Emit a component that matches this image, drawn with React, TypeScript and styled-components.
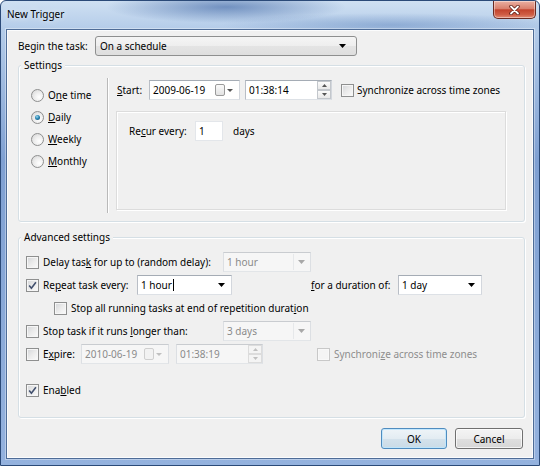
import React from "react";
import styled, { createGlobalStyle, css } from "styled-components";

const GlobalStyle = createGlobalStyle`
  html, body { margin: 0; padding: 0; background: #fff; }
  *, *::before, *::after { box-sizing: border-box; }
`;

const Window = styled.div`
  width: 540px;
  height: 466px;
  display: flex;
  flex-direction: column;
  border: 1px solid #2b4a78;
  border-radius: 6px 6px 0 0;
  overflow: hidden;
  background:
    radial-gradient(ellipse 120px 16px at 225px 6px, rgba(55, 95, 160, 0.6), rgba(55, 95, 160, 0)),
    radial-gradient(ellipse 170px 12px at 390px 24px, rgba(80, 120, 180, 0.4), rgba(80, 120, 180, 0)),
    linear-gradient(180deg, #cfe0f2 0px, #b4cce9 28px, #7fa0d2 160px, #94b2de 100%);
  font-family: "Noto Sans", "Open Sans", sans-serif;
  font-size: 10px;
  color: #000;
`;

const TitleBar = styled.div`
  height: 28px;
  flex: none;
  display: flex;
  align-items: flex-start;
`;

const Title = styled.span`
  padding-left: 6px;
  line-height: 26px;
  text-shadow: 0 0 6px rgba(255, 255, 255, 0.9);
`;

const CloseButton = styled.div`
  margin-left: auto;
  margin-right: 3px;
  width: 43px;
  height: 18px;
  display: flex;
  align-items: center;
  justify-content: center;
  border: 1px solid #6a2a22;
  border-top: none;
  border-radius: 0 0 5px 5px;
  background: linear-gradient(180deg, #eab0a2 0%, #d9806d 45%, #c2432d 52%, #cf5d45 80%, #e28c76 100%);
  box-shadow: inset 0 0 0 1px rgba(255, 255, 255, 0.4);
`;

const Client = styled.div`
  flex: 1;
  margin: 0 5px 6px;
  border: 1px solid #4e6c97;
  background: #f0f0f0;
  box-shadow: inset 1px 1px 0 #fbfcfd, inset -1px -1px 0 #fbfcfd, 0 0 0 1px rgba(255, 255, 255, 0.35);
  display: flex;
  flex-direction: column;
  padding: 6px 8px 0 11px;
`;

const FieldRow = styled.div<{ $mt?: number }>`
  display: flex;
  align-items: center;
  height: 20px;
  flex: none;
  margin-top: ${(p) => p.$mt ?? 0}px;
`;

const Label = styled.span<{ $w?: number; $ml?: number; $disabled?: boolean }>`
  flex: none;
  width: ${(p) => (p.$w ? `${p.$w}px` : "auto")};
  margin-left: ${(p) => p.$ml ?? 0}px;
  white-space: nowrap;
  color: ${(p) => (p.$disabled ? "#8d8d8d" : "#000")};
  u {
    text-underline-offset: 1px;
  }
`;

const DropList = styled.div<{ $w: number }>`
  width: ${(p) => p.$w}px;
  height: 20px;
  flex: none;
  display: flex;
  align-items: center;
  padding: 0 10px 0 4px;
  border: 1px solid #8e8f8f;
  border-radius: 3px;
  background: linear-gradient(180deg, #f5f5f5 0%, #eeeeee 50%, #e4e4e4 51%, #dedede 100%);
`;

const Field = styled.div<{ $w: number; $ml?: number; $disabled?: boolean; $soft?: boolean }>`
  width: ${(p) => p.$w}px;
  height: 20px;
  flex: none;
  display: flex;
  align-items: center;
  margin-left: ${(p) => p.$ml ?? 0}px;
  padding-left: 3px;
  border: 1px solid;
  border-color: ${(p) =>
    p.$disabled
      ? "#c9ccd0 #dcdfe3 #e2e5e8 #dcdfe3"
      : p.$soft
      ? "#e3e6ea"
      : "#a5acb5 #d3d7dd #dde1e6 #b9bec6"};
  background: ${(p) => (p.$disabled ? "#f6f6f6" : "#fff")};
  color: ${(p) => (p.$disabled ? "#8a8a8a" : "#000")};
  white-space: nowrap;
`;

const CaretBox = styled.span<{ $mr: number; $ml?: string }>`
  margin-left: ${(p) => p.$ml ?? "auto"};
  margin-right: ${(p) => p.$mr}px;
  display: flex;
  flex: none;
`;

const Divider = styled.span`
  margin-left: auto;
  width: 1px;
  height: 16px;
  background: #e6e8ea;
  flex: none;
`;

const CalendarIcon = styled.span<{ $disabled?: boolean }>`
  margin-left: auto;
  width: 10px;
  height: 12px;
  flex: none;
  border: 1px solid ${(p) => (p.$disabled ? "#cfcfcf" : "#9a9a9a")};
  border-radius: 2px;
  background: ${(p) =>
    p.$disabled ? "#f2f2f2" : "linear-gradient(180deg, #fafafa 0%, #e2e2e2 100%)"};
`;

const Spinner = styled.span`
  margin-left: auto;
  width: 14px;
  height: 18px;
  flex: none;
  display: flex;
  flex-direction: column;
`;

const SpinHalf = styled.span<{ $disabled?: boolean }>`
  flex: 1;
  display: flex;
  align-items: center;
  justify-content: center;
  border: 1px solid ${(p) => (p.$disabled ? "#dcdcdc" : "#c3c7cc")};
  background: ${(p) =>
    p.$disabled ? "#f4f4f4" : "linear-gradient(180deg, #fbfbfb 0%, #e8e8e8 100%)"};
`;

const TextCaret = styled.span`
  width: 1px;
  height: 12px;
  background: #000;
  margin-left: 1px;
`;

const Group = styled.div<{ $mt: number; $h: number }>`
  position: relative;
  flex: none;
  margin-top: ${(p) => p.$mt}px;
  height: ${(p) => p.$h}px;
  border: 1px solid #d5dfe5;
  border-radius: 3px;
  box-shadow: inset 1px 1px 0 #fff, 1px 1px 0 #fff;
`;

const GroupTitle = styled.span`
  position: absolute;
  top: -8px;
  left: 2px;
  padding: 0 3px;
  line-height: 14px;
  background: #f0f0f0;
`;

const SettingsBody = styled.div`
  display: flex;
  height: 100%;
`;

const RadioColumn = styled.div`
  width: 88px;
  flex: none;
  padding: 18px 0 0 12px;
  display: flex;
  flex-direction: column;
`;

const RadioRow = styled.div`
  display: flex;
  align-items: center;
  gap: 4px;
  height: 22px;
`;

const RadioDot = styled.span<{ $on?: boolean }>`
  position: relative;
  width: 13px;
  height: 13px;
  flex: none;
  border-radius: 50%;
  border: 1px solid #8e8f8f;
  background: radial-gradient(circle at 65% 65%, #ffffff 0%, #eeeeee 45%, #d2d2d2 100%);
  ${(p) =>
    p.$on &&
    css`
      &::after {
        content: "";
        position: absolute;
        left: 3px;
        top: 3px;
        width: 5px;
        height: 5px;
        border-radius: 50%;
        background: radial-gradient(circle at 40% 35%, #9fdaf0 0%, #2b86b3 45%, #0e4a6c 100%);
      }
    `}
`;

const Separator = styled.div`
  width: 2px;
  flex: none;
  margin: 12px 0 8px;
  border-left: 1px solid #b9b9b9;
  border-right: 1px solid #fff;
`;

const ScheduleArea = styled.div`
  flex: 1;
  display: flex;
  flex-direction: column;
  padding: 14px 0 0 8px;
`;

const RecurPanel = styled.div`
  margin: 11px 0 0 -1px;
  width: 390px;
  height: 99px;
  border: 1px solid #dcdcdc;
  box-shadow: inset 1px 1px 0 #fff, 1px 1px 0 #fff;
  padding: 9px 0 0 12px;
`;

const AdvancedBody = styled.div`
  display: flex;
  flex-direction: column;
  gap: 3px;
  padding: 14px 0 0 7px;
`;

const CheckBox = styled.span<{ $ml?: number; $disabled?: boolean }>`
  width: 13px;
  height: 13px;
  flex: none;
  display: flex;
  align-items: center;
  justify-content: center;
  margin-left: ${(p) => p.$ml ?? 0}px;
  border: 1px solid ${(p) => (p.$disabled ? "#c8c8c8" : "#8e8f8f")};
  background: ${(p) =>
    p.$disabled ? "#f4f4f4" : "linear-gradient(135deg, #d3d5d8 0%, #ebebeb 50%, #fbfbfb 100%)"};
  box-shadow: inset 0 0 0 1px ${(p) => (p.$disabled ? "#f8f8f8" : "#f6f6f6")};
`;

const ButtonRow = styled.div`
  display: flex;
  justify-content: flex-end;
  gap: 8px;
  margin: 10px 2px 0 0;
`;

const Button = styled.button<{ $w: number; $default?: boolean }>`
  width: ${(p) => p.$w}px;
  height: 21px;
  padding: 0;
  font: inherit;
  color: #000;
  border-radius: 3px;
  border: 1px solid ${(p) => (p.$default ? "#4f8cbf" : "#707070")};
  background: ${(p) =>
    p.$default
      ? "linear-gradient(180deg, #eef4f8 0%, #e3ecf2 50%, #d4e2ec 51%, #cadbe6 100%)"
      : "linear-gradient(180deg, #f4f4f4 0%, #ececec 50%, #dfdfdf 51%, #d6d6d6 100%)"};
  box-shadow: inset 0 0 0 1px ${(p) => (p.$default ? "rgba(190,230,253,0.9)" : "rgba(255,255,255,0.7)")};
`;

const Caret = ({ color = "#000", mr = 6 }: { color?: string; mr?: number }) => (
  <CaretBox $mr={mr}>
    <svg width="7" height="4" viewBox="0 0 7 4">
      <polygon points="0,0 7,0 3.5,4" fill={color} />
    </svg>
  </CaretBox>
);

const Check = () => (
  <svg width="9" height="9" viewBox="0 0 9 9">
    <path d="M1.2 4.6 L3.4 7.3 L7.9 1.3" fill="none" stroke="#42506e" strokeWidth="1.6" />
  </svg>
);

const Arrow = ({ up, color }: { up?: boolean; color: string }) => (
  <svg width="5" height="3" viewBox="0 0 5 3">
    <polygon points={up ? "0,3 2.5,0 5,3" : "0,0 5,0 2.5,3"} fill={color} />
  </svg>
);

const ComboBox = ({ w, ml, children, disabled }: { w: number; ml?: number; children: React.ReactNode; disabled?: boolean }) =>
  disabled ? (
    <Field $w={w} $ml={ml} $disabled>
      {children}
      <Divider />
      <CaretBox $mr={5} $ml="4px">
        <svg width="7" height="4" viewBox="0 0 7 4">
          <polygon points="0,0 7,0 3.5,4" fill="#a8a8a8" />
        </svg>
      </CaretBox>
    </Field>
  ) : (
    <Field $w={w} $ml={ml}>
      {children}
      <Caret />
    </Field>
  );

const DatePicker = ({ w, value, disabled }: { w: number; value: string; disabled?: boolean }) => (
  <Field $w={w} $disabled={disabled}>
    {value}
    <CalendarIcon $disabled={disabled} />
    <CaretBox $mr={6} $ml="2px">
      <svg width="6" height="3" viewBox="0 0 6 3">
        <polygon points="0,0 6,0 3,3" fill={disabled ? "#c0c0c0" : "#555"} />
      </svg>
    </CaretBox>
  </Field>
);

const TimePicker = ({ w, ml, value, disabled }: { w: number; ml?: number; value: string; disabled?: boolean }) => (
  <Field $w={w} $ml={ml} $disabled={disabled}>
    {value}
    <Spinner>
      <SpinHalf $disabled={disabled}>
        <Arrow up color={disabled ? "#c0c0c0" : "#555"} />
      </SpinHalf>
      <SpinHalf $disabled={disabled}>
        <Arrow color={disabled ? "#c0c0c0" : "#555"} />
      </SpinHalf>
    </Spinner>
  </Field>
);

export default function App() {
  return (
    <>
      <GlobalStyle />
      <Window>
        <TitleBar>
          <Title>New Trigger</Title>
          <CloseButton aria-label="Close">
            <svg width="11" height="10" viewBox="0 0 11 10">
              <path d="M2 1.5 L9 8.5 M9 1.5 L2 8.5" stroke="#5a1a12" strokeWidth="3.4" strokeLinecap="round" />
              <path d="M2 1.5 L9 8.5 M9 1.5 L2 8.5" stroke="#fff" strokeWidth="1.8" strokeLinecap="round" />
            </svg>
          </CloseButton>
        </TitleBar>
        <Client>
          <FieldRow>
            <Label $w={77}>Begin the task:</Label>
            <DropList $w={262}>
              On a schedule
              <Caret mr={0} />
            </DropList>
          </FieldRow>

          <Group $mt={9} $h={157}>
            <GroupTitle>Settings</GroupTitle>
            <SettingsBody>
              <RadioColumn>
                <RadioRow>
                  <RadioDot />
                  <Label>
                    O<u>n</u>e time
                  </Label>
                </RadioRow>
                <RadioRow>
                  <RadioDot $on />
                  <Label>
                    <u>D</u>aily
                  </Label>
                </RadioRow>
                <RadioRow>
                  <RadioDot />
                  <Label>
                    <u>W</u>eekly
                  </Label>
                </RadioRow>
                <RadioRow>
                  <RadioDot />
                  <Label>
                    <u>M</u>onthly
                  </Label>
                </RadioRow>
              </RadioColumn>
              <Separator />
              <ScheduleArea>
                <FieldRow>
                  <Label $w={32}>
                    <u>S</u>tart:
                  </Label>
                  <DatePicker w={91} value="2009-06-19" />
                  <TimePicker w={87} ml={5} value="01:38:14" />
                  <CheckBox $ml={9} />
                  <Label $ml={3}>Synchronize across time zones</Label>
                </FieldRow>
                <RecurPanel>
                  <FieldRow>
                    <Label $w={66}>
                      Re<u>c</u>ur every:
                    </Label>
                    <Field $w={28} $soft>
                      1
                    </Field>
                    <Label $ml={10}>days</Label>
                  </FieldRow>
                </RecurPanel>
              </ScheduleArea>
            </SettingsBody>
          </Group>

          <Group $mt={15} $h={181}>
            <GroupTitle>Advanced settings</GroupTitle>
            <AdvancedBody>
              <FieldRow>
                <CheckBox />
                <Label $ml={4} $w={180}>
                  Delay tas<u>k</u> for up to (random delay):
                </Label>
                <ComboBox w={88} disabled>
                  1 hour
                </ComboBox>
              </FieldRow>
              <FieldRow>
                <CheckBox>
                  <Check />
                </CheckBox>
                <Label $ml={4} $w={94}>
                  Re<u>p</u>eat task every:
                </Label>
                <ComboBox w={95}>
                  1 hour
                  <TextCaret />
                </ComboBox>
                <Label $ml={79} $w={87}>
                  <u>f</u>or a duration of:
                </Label>
                <ComboBox w={84}>1 day</ComboBox>
              </FieldRow>
              <FieldRow>
                <CheckBox $ml={28} />
                <Label $ml={4}>
                  Stop all running tasks at end of repetition durat<u>i</u>on
                </Label>
              </FieldRow>
              <FieldRow>
                <CheckBox />
                <Label $ml={4} $w={180}>
                  Stop task if it runs <u>l</u>onger than:
                </Label>
                <ComboBox w={88} disabled>
                  3 days
                </ComboBox>
              </FieldRow>
              <FieldRow>
                <CheckBox />
                <Label $ml={4} $w={38}>
                  E<u>x</u>pire:
                </Label>
                <DatePicker w={88} value="2010-06-19" disabled />
                <TimePicker w={87} ml={7} value="01:38:19" disabled />
                <CheckBox $ml={54} $disabled />
                <Label $ml={4} $disabled>
                  Synchroni<u>z</u>e across time zones
                </Label>
              </FieldRow>
              <FieldRow $mt={13}>
                <CheckBox>
                  <Check />
                </CheckBox>
                <Label $ml={4}>
                  Ena<u>b</u>led
                </Label>
              </FieldRow>
            </AdvancedBody>
          </Group>

          <ButtonRow>
            <Button $w={66} $default>
              OK
            </Button>
            <Button $w={68}>Cancel</Button>
          </ButtonRow>
        </Client>
      </Window>
    </>
  );
}
